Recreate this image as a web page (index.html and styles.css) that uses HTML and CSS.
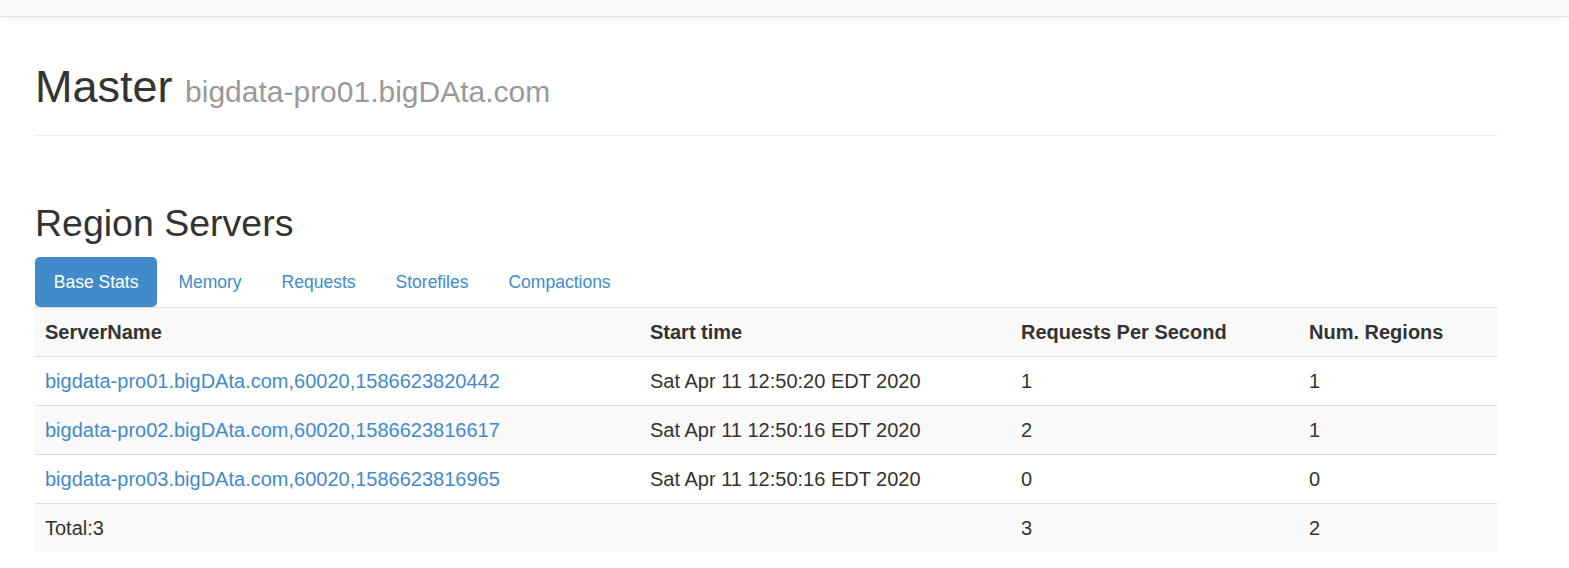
FILE: index.html
```html
<!DOCTYPE html>
<html>
<head>
<meta charset="utf-8">
<title>Master: bigdata-pro01.bigDAta.com</title>
<link rel="stylesheet" href="styles.css">
</head>
<body>
<div class="navbar"></div>
<div class="content">
  <div class="page-header">
    <h1>Master <small>bigdata-pro01.bigDAta.com</small></h1>
  </div>
  <section class="section">
    <h2>Region Servers</h2>
    <ul class="pills">
      <li><a class="active" href="#tab_baseStats">Base Stats</a></li>
      <li><a href="#tab_memoryStats">Memory</a></li>
      <li><a href="#tab_requestStats">Requests</a></li>
      <li><a href="#tab_storeStats">Storefiles</a></li>
      <li><a href="#tab_compactStats">Compactions</a></li>
    </ul>
    <table class="table">
      <colgroup>
        <col class="c1"><col class="c2"><col class="c3"><col class="c4">
      </colgroup>
      <tbody>
        <tr>
          <th>ServerName</th>
          <th>Start time</th>
          <th>Requests Per Second</th>
          <th>Num. Regions</th>
        </tr>
        <tr>
          <td><a href="#">bigdata-pro01.bigDAta.com,60020,1586623820442</a></td>
          <td>Sat Apr 11 12:50:20 EDT 2020</td>
          <td>1</td>
          <td>1</td>
        </tr>
        <tr>
          <td><a href="#">bigdata-pro02.bigDAta.com,60020,1586623816617</a></td>
          <td>Sat Apr 11 12:50:16 EDT 2020</td>
          <td>2</td>
          <td>1</td>
        </tr>
        <tr>
          <td><a href="#">bigdata-pro03.bigDAta.com,60020,1586623816965</a></td>
          <td>Sat Apr 11 12:50:16 EDT 2020</td>
          <td>0</td>
          <td>0</td>
        </tr>
        <tr>
          <td>Total:3</td>
          <td></td>
          <td>3</td>
          <td>2</td>
        </tr>
      </tbody>
    </table>
  </section>
</div>
</body>
</html>
```
FILE: styles.css
```css
html, body {
  margin: 0;
  padding: 0;
  background: #fff;
}
body {
  font-family: "Liberation Sans", Arial, Helvetica, sans-serif;
  color: #333;
  font-size: 17.5px;
  overflow: hidden;
}
a {
  color: #428bca;
  text-decoration: none;
}
.navbar {
  height: 16px;
  background: #f8f8f8;
  border-bottom: 1px solid #e2e2e2;
  box-shadow: 0 2px 8px rgba(0, 0, 0, 0.06);
}
.content {
  width: 1462px;
  margin-left: 35px;
}
.page-header {
  margin-top: 45px;
  padding-bottom: 23px;
  border-bottom: 1px solid #eee;
}
.page-header h1 {
  margin: 0;
  height: 50px;
  font-size: 45px;
  font-weight: 500;
  line-height: 50px;
  color: #333;
}
.page-header h1 small {
  font-size: 30px;
  font-weight: 400;
  line-height: 1;
  color: #999;
}
.section h2 {
  margin: 67px 0 13px;
  font-size: 37.5px;
  font-weight: 500;
  line-height: 41px;
  color: #333;
}
.pills {
  display: flex;
  gap: 2.5px;
  list-style: none;
  margin: 0;
  padding: 0;
}
.pills a {
  display: block;
  height: 50px;
  line-height: 50px;
  padding: 0 18.75px;
  border-radius: 5px;
  font-size: 17.5px;
  color: #428bca;
}
.pills a.active {
  background: #428bca;
  color: #fff;
}
.table {
  width: 1462px;
  border-collapse: collapse;
  border-spacing: 0;
  table-layout: fixed;
  font-size: 20px;
}
.c1 { width: 605px; }
.c2 { width: 371px; }
.c3 { width: 288px; }
.c4 { width: 198px; }
.table th,
.table td {
  padding: 10px;
  line-height: 28px;
  text-align: left;
  vertical-align: top;
  border-top: 1px solid #ddd;
  white-space: nowrap;
}
.table th {
  font-weight: 700;
}
.table tr:nth-child(odd) {
  background: #f9f9f9;
}
```
